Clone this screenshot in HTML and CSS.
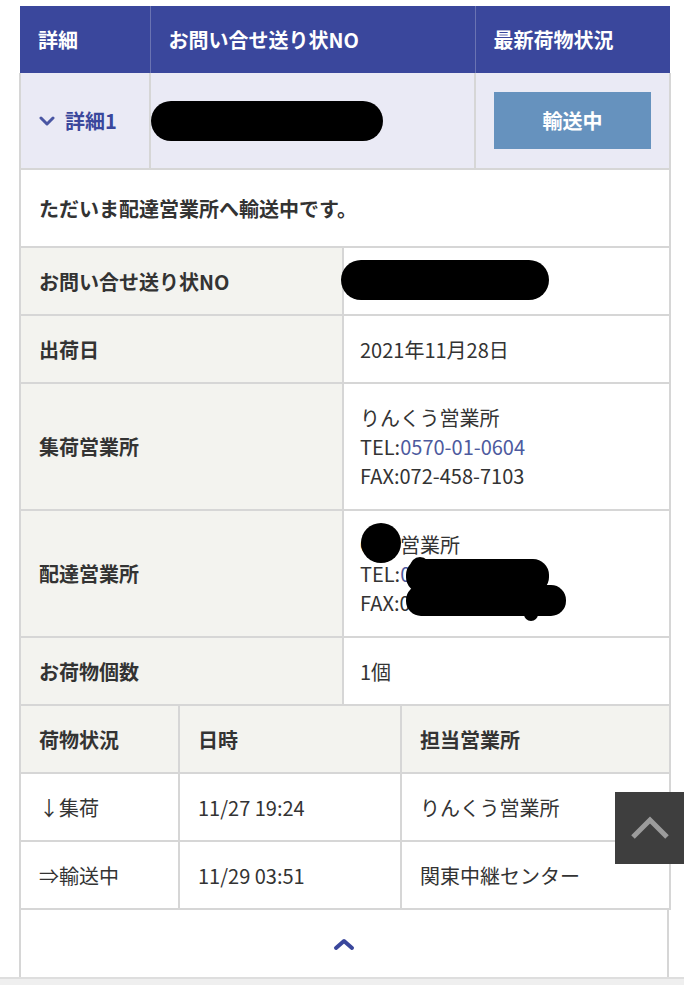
FILE: index.html
```html
<!DOCTYPE html>
<html lang="ja">
<head>
    <meta charset="UTF-8">
    <meta name="viewport" content="width=device-width, initial-scale=1.0">
    <title>お問い合せ結果</title>
    <link rel="stylesheet" href="styles.css">
</head>
<body>

    <div class="container">
        <!-- 概要 -->
        <table class="summary">
            <colgroup>
                <col class="col-detail">
                <col class="col-no">
                <col class="col-status">
            </colgroup>
            <thead>
                <tr>
                    <th>詳細</th>
                    <th>お問い合せ送り状NO</th>
                    <th>最新荷物状況</th>
                </tr>
            </thead>
            <tbody>
                <tr class="summary-row">
                    <td>
                        <a class="toggle" href="#">
                            <svg class="toggle-icon" width="16" height="10" viewBox="0 0 16 10"><polyline points="2,2 8,8 14,2" fill="none" stroke="#4a56a3" stroke-width="3" stroke-linecap="round" stroke-linejoin="round"/></svg>詳細1
                        </a>
                    </td>
                    <td class="no-cell"><span class="redact redact-summary"></span></td>
                    <td><span class="status-btn">輸送中</span></td>
                </tr>
                <tr>
                    <td colspan="3" class="message">ただいま配達営業所へ輸送中です。</td>
                </tr>
            </tbody>
        </table>

        <!-- 詳細 -->
        <table class="details">
            <colgroup>
                <col class="col-label">
                <col class="col-value">
            </colgroup>
            <tr class="row-s">
                <th>お問い合せ送り状NO</th>
                <td class="no-cell"><span class="redact redact-no"></span></td>
            </tr>
            <tr class="row-s">
                <th>出荷日</th>
                <td>2021年11月28日</td>
            </tr>
            <tr class="row-l">
                <th>集荷営業所</th>
                <td>りんくう営業所<br>TEL:<a class="tel" href="#">0570-01-0604</a><br>FAX:072-458-7103</td>
            </tr>
            <tr class="row-l">
                <th>配達営業所</th>
                <td class="office-cell">
                    〇〇営業所<br>TEL:<a class="tel" href="#">0000-00-0000</a><br>FAX:000-000-0000
                    <svg class="scribble" width="220" height="100" viewBox="0 0 220 100">
                        <circle cx="21" cy="22" r="20" fill="#000"/>
                        <rect x="46" y="38" width="143" height="34" rx="16" fill="#000"/>
                        <rect x="46" y="64" width="160" height="31" rx="15" fill="#000"/>
                        <circle cx="60" cy="46" r="10" fill="#000"/>
                        <circle cx="171" cy="93" r="7" fill="#000"/>
                    </svg>
                </td>
            </tr>
            <tr class="row-s">
                <th>お荷物個数</th>
                <td>1個</td>
            </tr>
        </table>

        <!-- 荷物状況 -->
        <table class="tracking">
            <colgroup>
                <col class="col-state">
                <col class="col-date">
                <col class="col-office">
            </colgroup>
            <tr>
                <th>荷物状況</th>
                <th>日時</th>
                <th>担当営業所</th>
            </tr>
            <tr>
                <td>↓集荷</td>
                <td>11/27 19:24</td>
                <td>りんくう営業所</td>
            </tr>
            <tr>
                <td>⇒輸送中</td>
                <td>11/29 03:51</td>
                <td>関東中継センター</td>
            </tr>
        </table>

        <div class="close-row">
            <svg width="22" height="14" viewBox="0 0 22 14"><polyline points="3,11 11,4 19,11" fill="none" stroke="#3a479c" stroke-width="4" stroke-linecap="round" stroke-linejoin="round"/></svg>
        </div>
    </div>

    <div class="bottom-bar"></div>

    <a class="page-top" href="#">
        <svg width="40" height="26" viewBox="0 0 40 26"><polyline points="3,22 20,5 37,22" fill="none" stroke="#9b9b9b" stroke-width="5"/></svg>
    </a>

</body>
</html>
```

FILE: styles.css
```css
body {
    margin: 0;
    font-family: "Noto Sans CJK JP", "Noto Sans", sans-serif;
    font-size: 20px;
    color: #333;
    background-color: #fff;
}

.container {
    width: 650px;
    margin: 6px 0 0 19px;
}

table {
    width: 100%;
    border-collapse: collapse;
    table-layout: fixed;
}

th, td {
    padding: 0 18px;
    text-align: left;
    border: 2px solid #d6d6d6;
}

th {
    font-weight: bold;
}

/* 概要 */
.col-detail { width: 130px; }
.col-no { width: 325px; }
.col-status { width: 195px; }

.summary thead th {
    height: 67px;
    background-color: #3a479c;
    color: #fff;
    border: none;
    border-left: 1px solid #6a73b2;
}

.summary thead th:first-child {
    border-left: none;
}

.summary-row td {
    height: 95px;
    background-color: #eaeaf5;
    border-top: none;
}

.toggle {
    display: flex;
    align-items: center;
    color: #3a479c;
    font-weight: bold;
    text-decoration: none;
}

.toggle-icon {
    margin-right: 10px;
}

.summary .no-cell,
.details .no-cell {
    padding-left: 0;
}

.redact {
    display: inline-block;
    background-color: #000;
    border-radius: 20px;
    vertical-align: middle;
}

.redact-summary {
    width: 232px;
    height: 40px;
}

.redact-no {
    width: 208px;
    height: 40px;
    margin-left: -3px;
    margin-top: -2px;
}

.status-btn {
    display: block;
    height: 57px;
    line-height: 57px;
    background-color: #6692be;
    color: #fff;
    font-weight: bold;
    text-align: center;
}

.message {
    height: 76px;
    font-weight: bold;
    background-color: #fff;
}

/* 詳細 */
.col-label { width: 323px; }
.col-value { width: 327px; }

.details {
    margin-top: -2px;
}

.details th {
    background-color: #f3f3ef;
}

.details td {
    padding-left: 16px;
    line-height: 29px;
}

.row-s th, .row-s td {
    height: 66px;
}

.row-l th, .row-l td {
    height: 125px;
}

.tel {
    color: #4d5a9e;
    text-decoration: none;
}

.office-cell {
    position: relative;
}

.scribble {
    position: absolute;
    left: 16px;
    top: 10px;
}

/* 荷物状況 */
.col-state { width: 159px; }
.col-date { width: 222px; }
.col-office { width: 269px; }

.tracking {
    margin-top: -2px;
}

.tracking th, .tracking td {
    height: 66px;
}

.tracking th {
    background-color: #f3f3ef;
}

.close-row {
    height: 67px;
    display: flex;
    justify-content: center;
    align-items: center;
    border-left: 2px solid #d6d6d6;
    border-right: 2px solid #d6d6d6;
    box-sizing: border-box;
}

.bottom-bar {
    height: 12px;
    background-color: #efefef;
    border-top: 2px solid #dedede;
}

.page-top {
    position: fixed;
    top: 792px;
    right: 0;
    width: 69px;
    height: 72px;
    background-color: #3e3e3e;
    display: flex;
    justify-content: center;
    align-items: center;
}
```
